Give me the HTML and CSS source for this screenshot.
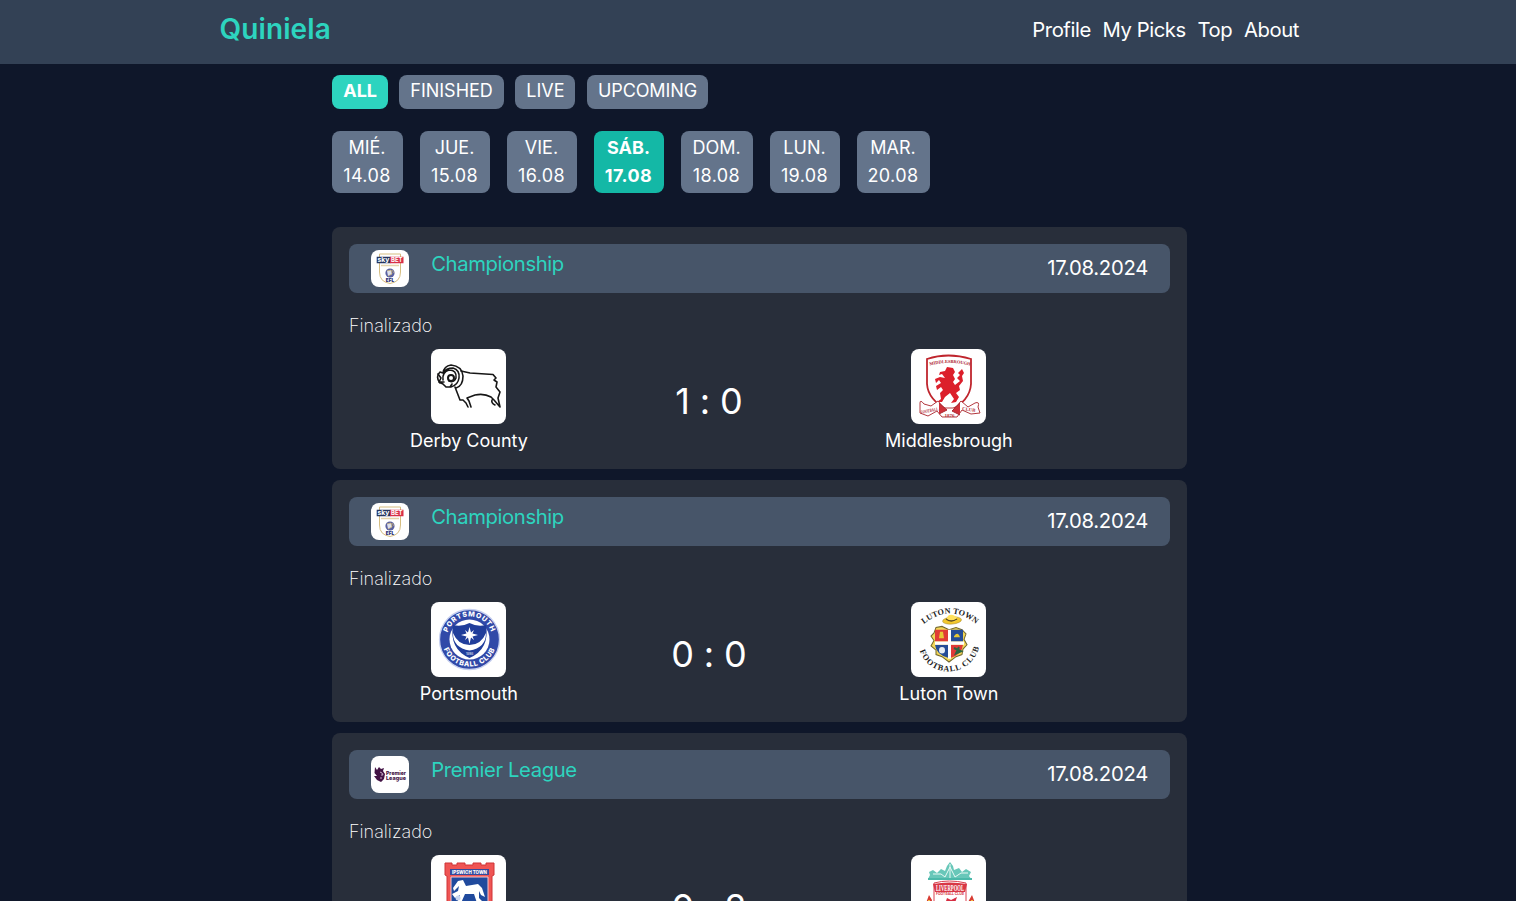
FILE: index.html
```html
<!DOCTYPE html>
<html lang="es">
<head>
<meta charset="utf-8">
<title>Quiniela</title>
<link rel="stylesheet" href="styles.css">
</head>
<body>
<svg class="defs" aria-hidden="true">
  <symbol id="efl" viewBox="0 0 38 37">
    <path d="M8.500 4H29.500V22Q29.500 32 19 33.500Q8.500 32 8.500 22Z" fill="#fff" stroke="#d5bd80"/>
    <path d="M5.700 6.700H19.500V13.300H5.700Z" fill="#26365f"/><path d="M19 6.700H32.500V13.300H19Z" fill="#d83048"/>
    <text x="6.500" y="12" class="crest-text" font-size="6" font-weight="700" fill="#fff" textLength="12" lengthAdjust="spacingAndGlyphs">sky</text>
    <text x="20" y="12.200" class="crest-text" font-size="6" font-weight="700" fill="#fff" textLength="11.500" lengthAdjust="spacingAndGlyphs">BET</text>
    <path d="M10 15.500H28" stroke="#e5d4ab" stroke-width="1.500"/>
    <circle cx="19" cy="23" r="4.600" fill="#5a61a0"/><path d="M16 21l4-1 1 4-4 2M21 20l2 3" fill="#dce0ef" stroke="#d2b771" stroke-width=".7"/>
    <text x="19" y="31.600" text-anchor="middle" class="crest-text" font-size="4.800" font-weight="900" fill="#272b72">EFL</text>
  </symbol>
</svg>
<header class="topbar">
  <div class="topbar-inner">
    <a class="brand">Quiniela</a>
    <nav class="nav"><a>Profile</a><a>My Picks</a><a>Top</a><a>About</a></nav>
  </div>
</header>
<main class="page">
  <div class="filters">
    <button class="chip chip-active">ALL</button><button class="chip chip-finished">FINISHED</button><button class="chip chip-live">LIVE</button><button class="chip chip-upcoming">UPCOMING</button>
  </div>
  <div class="dates">
    <button class="day day-wed">MIÉ.<br><span>14.08</span></button><button class="day">JUE.<br><span>15.08</span></button><button class="day">VIE.<br><span>16.08</span></button><button class="day day-active">SÁB.<br><span>17.08</span></button><button class="day day-sun">DOM.<br><span>18.08</span></button><button class="day">LUN.<br><span>19.08</span></button><button class="day day-tue">MAR.<br><span>20.08</span></button>
  </div>
  <section class="matches">
    <article class="card">
      <div class="league"><span class="league-logo"><svg viewBox="0 0 38 37"><use href="#efl"/></svg></span><span class="league-name">Championship</span><time class="league-date">17.08.2024</time></div>
      <p class="status">Finalizado</p>
      <div class="match">
        <div class="team">
          <span class="crest"><svg viewBox="0 0 75 75" fill="none" stroke="#171717" stroke-width="1.600" stroke-linecap="round" stroke-linejoin="round">
            <path d="M30 22L39 24L62 25.500L65 29L63 31L66 33L65 38L69 43L67 49L69 58L63 51L60 48Q53 44 44 46L36 49L38 52L40 58M61 51Q60 54 64 56M37 58L35 54L32 51H29L24 38"/>
            <path d="M9 34Q4 28 9 23L12 24Q13 17 20 16Q31 17 32 27Q32 37 25 39M12 24Q15 19 22 19Q29 21 28 29Q27 36 20 38M12 31Q11 23 18 21Q26 21 25 29Q23 34 18 32" stroke-width="1.600"/>
            <circle cx="20" cy="29" r="3" stroke-width="2"/><path d="M7 25L10 29L8 33L12 35L15 38L19 38L21 35M9 33H13"/>
          </svg></span>
          <span class="team-name">Derby County</span>
        </div>
        <div class="score">1 : 0</div>
        <div class="team">
          <span class="crest"><svg viewBox="0 0 75 75">
            <path d="M16 10Q37 3 60 10V35Q59 52 38 62Q17 51 16 35Z" fill="#fff" stroke="#bf252d" stroke-width="1.800"/>
            <path id="boroArc" d="M14 18Q38 10 64 18" fill="none"/><text class="crest-serif" font-size="4.500" font-weight="700" fill="#ae2631" text-anchor="middle"><textPath href="#boroArc" startOffset="50%">MIDDLESBROUGH</textPath></text>
            <path d="M36 18L42 19L44 23L42 26L44 30L42 33L44 36L49 32L46 29L49 26L47 24L51 20L53 24L51 27L52 32L48 37L49 41L45 44L48 48L45 53L40 54L43 50L39 44L34 48L31 53L26 53L30 50L29 44L32 41L30 38L26 41L25 37L30 34L28 31L25 34L24 30L29 28L34 29L31 25L28 26L29 23L34 22Z" fill="#dc1f2b"/>
            <path d="M9 54Q9 50 13 55L20 57L27 52L33 59L44 59L50 52L57 58L64 54Q69 52 67 58L69 64L60 65L51 61L46 68H31L26 62L17 67L9 64Z" fill="#fff" stroke="#b33a40"/>
            <path d="M28 54L36 61L28 65M49 54L41 62L49 66" fill="#cf3039" stroke="#aa2c34"/>
            <text x="10" y="65" transform="rotate(-12 10 65)" class="crest-serif" font-size="4.800" font-weight="700" fill="#b12e36" textLength="18" lengthAdjust="spacingAndGlyphs">FOOTBALL</text><text x="51" y="61" transform="rotate(8 51 61)" class="crest-serif" font-size="4.800" font-weight="700" fill="#b12e36">CLUB</text><text x="33.500" y="67.500" class="crest-serif" font-size="5" font-weight="700" fill="#b12e36">1876</text>
          </svg></span>
          <span class="team-name">Middlesbrough</span>
        </div>
      </div>
    </article>
    <article class="card">
      <div class="league"><span class="league-logo"><svg viewBox="0 0 38 37"><use href="#efl"/></svg></span><span class="league-name">Championship</span><time class="league-date">17.08.2024</time></div>
      <p class="status">Finalizado</p>
      <div class="match">
        <div class="team">
          <span class="crest"><svg viewBox="0 0 75 75">
            <circle cx="38.500" cy="37.500" r="30" fill="#3149a8" stroke="#c8d1f0" stroke-width="1.300"/><circle cx="38.500" cy="37.500" r="20" fill="#fff"/>
            <path d="M22 23Q31 25 38.500 21Q46 25 55 23Q59 47 38.500 56Q18 47 22 23Z" fill="#213e9b"/>
            <path d="M22 31Q27 43 38.500 43Q50 43 55 31Q55 46 38.500 48.500Q22 46 22 31Z" fill="#fff"/>
            <path d="M38.500 25L40 30.500L43 28L41.500 31.500L47 33L41.500 34.500L43 38L40 35.500L38.500 42L37 35.500L34 38L35.500 34.500L30 33L35.500 31.500L34 28L37 30.500Z" fill="#fff"/>
            <path id="pompeyTop" d="M16 41A22.800 22.800 0 1 1 61 41" fill="none"/><path id="pompeyBottom" d="M11 37A27.500 27.500 0 0 0 66 37" fill="none"/>
            <text class="crest-text" font-size="7" font-weight="800" fill="#fff" text-anchor="middle" letter-spacing=".65"><textPath href="#pompeyTop" startOffset="50%">PORTSMOUTH</textPath></text>
            <text class="crest-text" font-size="7" font-weight="800" fill="#fff" text-anchor="middle" letter-spacing=".6"><textPath href="#pompeyBottom" startOffset="50%">FOOTBALL CLUB</textPath></text>
            <text x="38.500" y="52.800" text-anchor="middle" class="crest-text" font-size="3.200" fill="#fff">1898</text>
          </svg></span>
          <span class="team-name">Portsmouth</span>
        </div>
        <div class="score">0 : 0</div>
        <div class="team">
          <span class="crest"><svg viewBox="0 0 75 75">
            <path id="lutonTop" d="M13 22Q39 1 65 22" fill="none"/><path id="lutonBottom" d="M8 46C15 77 61 79 69 42" fill="none"/>
            <text class="crest-serif" font-size="8.200" font-weight="600" fill="#222" text-anchor="middle" letter-spacing=".1"><textPath href="#lutonTop" startOffset="50%">LUTON TOWN</textPath></text><text class="crest-serif" font-size="8.200" font-weight="600" fill="#222" text-anchor="middle" letter-spacing=".8"><textPath href="#lutonBottom" startOffset="50%">FOOTBALL CLUB</textPath></text>
            <g transform="translate(0 -1.500) scale(1 1.080)">
            <path d="M25 25L23 30L20 33L23 37L20 42L25 46L25 50L31 52L38 57L45 52L51 50L52 45L56 41L53 36L55 31L51 27L45 25L38 27L31 24Z" fill="#f3d758" stroke="#72672b"/>
            <path d="M24 27H37V38H24Z" fill="#e03b36"/><path d="M40 27H52V38H40ZM24 41H37V53Q25 50 24 41Z" fill="#254c96"/><path d="M40 41H52Q51 50 40 53Z" fill="#df3a37"/>
            <path d="M24 39.500H53M38.500 27V54" stroke="#fff" stroke-width="3"/><path d="M29 29H32L33 35H28ZM43 33Q47 28 49 34H43Z" fill="#e6c735"/><circle cx="31" cy="46" r="3" fill="#e7edf3"/><path d="M43 44L50 47L45 49L48 43" stroke="#2b6642" stroke-width="2" fill="none"/>
            </g>
            <ellipse cx="41" cy="18.500" rx="9.500" ry="3.600" transform="rotate(-5 41 18)" fill="#f2c72c" stroke="#a18426" stroke-width=".5"/><path d="M36 16Q37 12 42 13L46 15L45 19Q40 20 36 17Z" fill="#ffe15c"/><path d="M35 17Q40 21 46 17" stroke="#594921" fill="none" stroke-width="1.300"/>
          </svg></span>
          <span class="team-name">Luton Town</span>
        </div>
      </div>
    </article>
    <article class="card">
      <div class="league"><span class="league-logo"><svg viewBox="0 0 38 37">
        <path d="M4 11L6 14L8 11L10 13L13 12L12 15L14 18L13 23L10 26L6 24L3 20L6 20L3.500 17Z" fill="#431345"/><path d="M9 16L11 17L12 19L10 19M9 22L11 22" fill="none" stroke="#c9adc8"/>
        <text x="15" y="18.600" class="crest-text" font-size="5.200" font-weight="800" fill="#431345" textLength="20" lengthAdjust="spacingAndGlyphs">Premier</text><text x="15" y="23.600" class="crest-text" font-size="5.200" font-weight="800" fill="#431345" textLength="20" lengthAdjust="spacingAndGlyphs">League</text>
      </svg></span><span class="league-name">Premier League</span><time class="league-date">17.08.2024</time></div>
      <p class="status">Finalizado</p>
      <div class="match">
        <div class="team">
          <span class="crest"><svg viewBox="0 0 75 75">
            <path d="M14 8H21V10H26V8H34V10H42V8H50V10H55V8H63V20L61 21V55L38 71L16 55V21L14 20Z" fill="#ef5554" stroke="#cf3437"/>
            <path d="M19 14H58V20H19Z" fill="#354a9c"/><text x="21" y="19" class="crest-text" font-size="5" font-weight="800" fill="#fff" textLength="35" lengthAdjust="spacingAndGlyphs">IPSWICH TOWN</text>
            <path d="M20 22H57V52L38 66L20 52Z" fill="#204a9d" stroke="#f7c7cb"/>
            <path d="M22 33L27 26L32 25L35 31L47 29L51 33L54 42L50 40L48 36L48 43L52 47L46 48L43 39L34 39L30 48L26 48L29 40L24 43L21 39L27 36L28 31L23 36Z" fill="#fff"/><circle cx="27" cy="43" r="2.500" fill="#c8d5f0"/>
          </svg></span>
          <span class="team-name">Ipswich Town</span>
        </div>
        <div class="score">0 : 2</div>
        <div class="team">
          <span class="crest"><svg viewBox="0 0 75 75">
            <path d="M17 24L19 20L18 17L22 15L26 18L30 14L34 16L36 11L39 7L42 11L43 15L48 13L51 17L55 14L60 17L58 21L61 25Z" fill="#68c7b9"/><path d="M22 19H30L34 22L39 12L44 22L50 18H57M39 9V24" stroke="#e9faf5" stroke-width="1" fill="none"/><path d="M17 24H61" stroke="#4cb9aa" stroke-width="2"/>
            <path d="M23 28Q38 24 55 28V54L39 66L23 54Z" fill="#fff" stroke="#db4050"/><path d="M22 29Q38 26 56 29L54 37H24Z" fill="#d83745"/>
            <text x="25" y="36" class="crest-serif" font-size="7.500" font-weight="700" fill="#fff" textLength="28" lengthAdjust="spacingAndGlyphs">LIVERPOOL</text><text x="25" y="40" class="crest-text" font-size="3.500" font-weight="700" fill="#d83745" textLength="28" lengthAdjust="spacingAndGlyphs">FOOTBALL CLUB</text>
            <path d="M36 43L40 45L46 42L44 48L39 55L34 49Z" fill="#d62d42"/><path d="M18 40L21 45L20 56H16L15 48ZM61 40L64 48L62 56H58L57 47Z" fill="#d83b32"/><path d="M18 45V54M61 45V54" stroke="#f3bb42" stroke-width="2"/>
          </svg></span>
          <span class="team-name">Liverpool</span>
        </div>
      </div>
    </article>
  </section>
</main>
</body>
</html>
```
FILE: styles.css
```css
* { box-sizing: border-box; }
html { height: 100%; overflow: hidden; font-size: 18px; }
body { height: 100%; margin: 0; overflow: hidden; background: #0f172a; color: #fff; font-family: Inter, "Liberation Sans", sans-serif; line-height: 28px; }
button { margin: 0; border: 0; color: inherit; font: inherit; }
.defs { display: none; }
.crest-text { font-family: Inter, sans-serif; }
.crest-serif { font-family: "Liberation Serif", serif; }
.topbar { height: 64px; background: #334155; }
.topbar-inner { display: flex; justify-content: space-between; width: 1080px; margin: 0 auto; padding: 11px 0; transform: translateX(1.5px); }
.brand { color: #2dd4bf; font-size: 28px; font-weight: 600; line-height: 37px; letter-spacing: .1px; }
.nav { display: flex; gap: 11.7px; padding-top: 5px; margin-right: .5px; font-size: 20.25px; letter-spacing: -.42px; }
.page { width: 855px; margin-left: 332px; padding-top: 11px; }
.filters { display: flex; gap: 11px; }
.chip { height: 34px; padding: 2px 11.25px 4px; border-radius: 8px; background: #64748b; }
.chip-active { width: 56px; background: #2dd4bf; font-weight: 700; }
.chip-finished { width: 105px; }
.chip-live { width: 60px; margin-right: 1px; }
.chip-upcoming { width: 121px; padding-right: 10.5px; padding-left: 10.5px; letter-spacing: -.1px; }
.dates { display: flex; gap: 17px; margin-top: 22px; }
.day { width: 70px; height: 62px; padding: 3px 1px 3px 0; border-radius: 8px; background: #64748b; text-align: center; }
.day span { letter-spacing: .4px; }
.day-wed { width: 71px; }
.day-sun { width: 72px; }
.day-tue { width: 73px; }
.day-active { background: #14b8a6; font-weight: 700; }
.matches { display: grid; gap: 11px; margin-top: 34px; }
.card { height: 242px; padding: 17px; border-radius: 8px; background: #282e3a; }
.league { display: flex; height: 49px; padding: 6px 22px; border-radius: 8px; background: #475569; font-size: 20.25px; }
.league-logo { width: 38px; height: 37px; overflow: hidden; border-radius: 8px; background: #fff; }
.league-logo svg, .crest svg { display: block; width: 100%; height: 100%; }
.league-name { margin-left: 22.2px; color: #2dd4bf; letter-spacing: -.38px; }
.league-date { margin: 4px 0 0 auto; letter-spacing: -.26px; }
.status { margin: 19px 0 9px; font-weight: 200; }
.match { display: grid; grid-template-columns: repeat(3, 240px); margin-left: -.1px; }
.team { display: flex; flex-direction: column; align-items: center; }
.crest { width: 75px; height: 75px; overflow: hidden; border-radius: 8px; background: #fff; }
.team-name { margin-top: 3px; }
.score { padding-top: 32px; font-size: 36px; line-height: 40px; letter-spacing: -.1px; text-align: center; }
```
